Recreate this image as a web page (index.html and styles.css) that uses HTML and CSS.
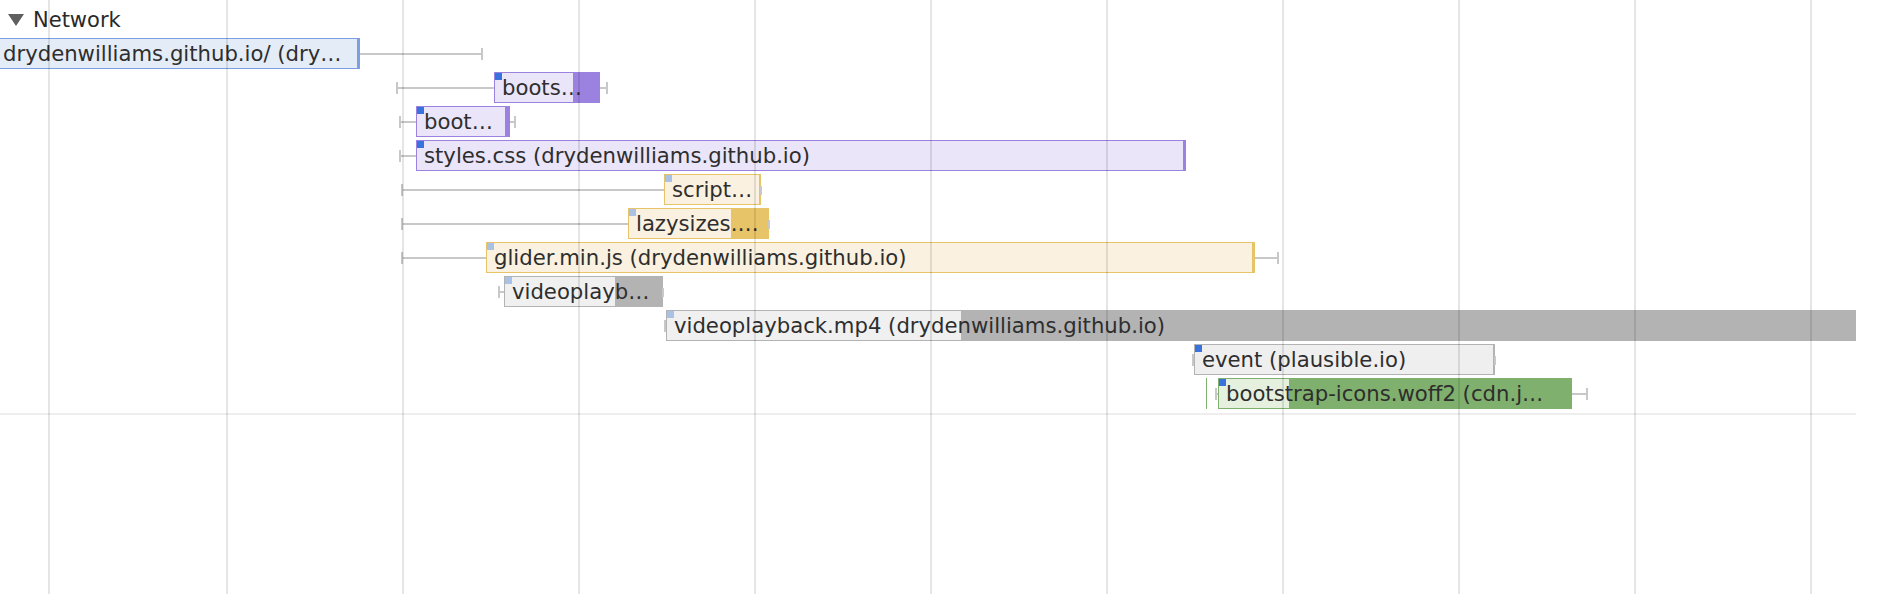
FILE: index.html
```html
<!DOCTYPE html>
<html lang="en">
<head>
<meta charset="utf-8">
<title>Network</title>
<link rel="stylesheet" href="styles.css">
</head>
<body>
<div class="timeline">
  <div class="track-header">
    <span class="caret"></span>
    <span class="track-title">Network</span>
  </div>
  <div class="rows">
    <div class="row">
      <div class="bar doc" style="left:-5px;width:365px;--split:361px">drydenwilliams.github.io/ (dry…</div>
      <div class="wr" style="left:360px;width:123px"></div>
    </div>
    <div class="row">
      <div class="wl" style="left:396px;width:98px"></div>
      <div class="bar css hi" style="left:494px;width:106px;--split:78px">boots…</div>
      <div class="wr" style="left:600px;width:8px"></div>
    </div>
    <div class="row">
      <div class="wl" style="left:399px;width:17px"></div>
      <div class="bar css hi" style="left:416px;width:94px;--split:88px">boot…</div>
      <div class="wr" style="left:510px;width:6px"></div>
    </div>
    <div class="row">
      <div class="wl" style="left:399px;width:17px"></div>
      <div class="bar css hi" style="left:416px;width:770px;--split:766px">styles.css (drydenwilliams.github.io)</div>
    </div>
    <div class="row">
      <div class="wl" style="left:401px;width:263px"></div>
      <div class="bar js lo" style="left:664px;width:97px;--split:94px">script…</div>
      <div class="wr short" style="left:760px;width:2px"></div>
    </div>
    <div class="row">
      <div class="wl" style="left:401px;width:227px"></div>
      <div class="bar js lo" style="left:628px;width:141px;--split:102px">lazysizes.…</div>
      <div class="wr short" style="left:768px;width:2px"></div>
    </div>
    <div class="row">
      <div class="wl" style="left:401px;width:85px"></div>
      <div class="bar js lo" style="left:486px;width:769px;--split:765px">glider.min.js (drydenwilliams.github.io)</div>
      <div class="wr" style="left:1255px;width:24px"></div>
    </div>
    <div class="row">
      <div class="wl" style="left:498px;width:6px"></div>
      <div class="bar media lo" style="left:504px;width:159px;--split:110px">videoplayb…</div>
      <div class="wr short" style="left:662px;width:2px"></div>
    </div>
    <div class="row">
      <div class="wl" style="left:664px;width:2px"></div>
      <div class="bar media lo" style="left:666px;width:1220px;--split:294px">videoplayback.mp4 (drydenwilliams.github.io)</div>
    </div>
    <div class="row">
      <div class="wl" style="left:1192px;width:2px"></div>
      <div class="bar other hi" style="left:1194px;width:301px;--split:298px">event (plausible.io)</div>
      <div class="wr short" style="left:1494px;width:2px"></div>
    </div>
    <div class="row">
      <div class="mark" style="left:1206px"></div>
      <div class="wl" style="left:1215px;width:3px"></div>
      <div class="bar font hi" style="left:1218px;width:354px;--split:70px">bootstrap-icons.woff2 (cdn.j…</div>
      <div class="wr" style="left:1572px;width:16px"></div>
    </div>
  </div>
  <div class="divider"></div>
  <div class="grid">
    <span class="gl"></span><span class="gl"></span><span class="gl"></span><span class="gl"></span>
    <span class="gl"></span><span class="gl"></span><span class="gl"></span><span class="gl"></span>
    <span class="gl"></span><span class="gl"></span><span class="gl"></span>
  </div>
</div>
</body>
</html>
```
FILE: styles.css
```css
html, body {
  margin: 0;
  padding: 0;
  background: #ffffff;
}

body {
  width: 1878px;
  height: 594px;
  overflow: hidden;
  font-family: "DejaVu Sans", "Noto Sans", sans-serif;
  color: #303030;
}

.timeline {
  position: relative;
  width: 1856px;
  height: 594px;
  overflow: hidden;
}

.track-header {
  height: 38px;
  display: flex;
  align-items: center;
  padding-left: 8px;
  box-sizing: border-box;
}

.caret {
  width: 0;
  height: 0;
  border-left: 8px solid transparent;
  border-right: 8px solid transparent;
  border-top: 12px solid #5f5f5f;
  margin-top: 2px;
  margin-right: 9px;
}

.track-title {
  font-size: 21px;
  line-height: 26px;
  color: #2a2a2a;
  padding-top: 2px;
}

.rows {
  display: flex;
  flex-direction: column;
}

.row {
  position: relative;
  height: 34px;
}

.bar {
  position: absolute;
  top: 0;
  height: 31px;
  box-sizing: border-box;
  border: 1px solid var(--dark);
  background: linear-gradient(to right, var(--fill) 0, var(--fill) var(--split), var(--dark) var(--split), var(--dark) 100%);
  padding-left: 7px;
  font-size: 21.2px;
  line-height: 29px;
  white-space: nowrap;
  overflow: hidden;
  color: #2e2e2e;
}

.bar.hi::before,
.bar.lo::before {
  content: "";
  position: absolute;
  left: 0;
  top: 0;
  width: 7px;
  height: 7px;
}

.bar.hi::before { background: #3a72dd; }
.bar.lo::before { background: #a9c1e4; }

.doc   { --fill: #e4ecf8; --dark: #7b9fe2; }
.css   { --fill: #eae5f8; --dark: #9c82e0; }
.js    { --fill: #fbf1e0; --dark: #e8c468; }
.media { --fill: #f0f0f0; --dark: #b3b3b3; }
.other { --fill: #efefef; --dark: #b3b3b3; }
.font  { --fill: #e5f0df; --dark: #80b06d; }

.wl,
.wr {
  position: absolute;
  top: 15px;
  height: 2px;
  background: #c8c8c8;
}

.wl::before,
.wr::before {
  content: "";
  position: absolute;
  top: -5px;
  width: 2px;
  height: 12px;
  background: #c8c8c8;
}

.wl::before { left: 0; }
.wr::before { right: 0; }

.wr.short { background: transparent; }
.wr.short::before { top: -3px; height: 9px; }

.mark {
  position: absolute;
  top: 0;
  width: 1px;
  height: 31px;
  background: #80b06d;
}

.divider {
  margin-top: 1px;
  height: 2px;
  background: #eeeeee;
}

.grid {
  position: absolute;
  inset: 0;
  display: flex;
  padding-left: 48px;
  gap: 174px;
  pointer-events: none;
}

.gl {
  width: 2px;
  height: 100%;
  background: rgba(0, 0, 0, 0.1);
}

.gl:first-child {
  margin-right: 2px;
}
```
